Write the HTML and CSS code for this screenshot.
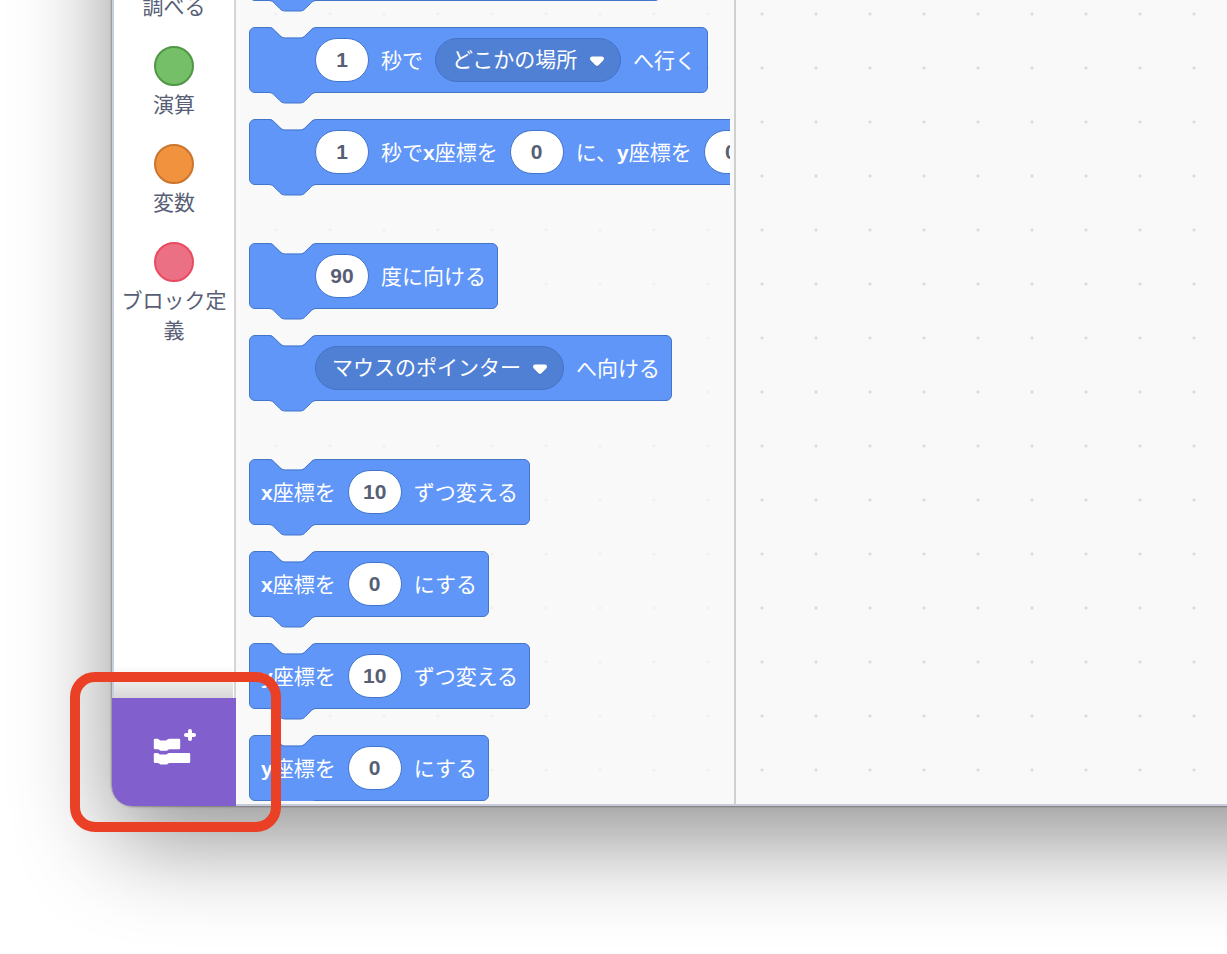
FILE: index.html
```
<!DOCTYPE html>
<html lang="ja">
<head>
<meta charset="utf-8">
<title>ブロックエディター</title>
<link rel="stylesheet" href="styles.css">
</head>
<body>
<svg class="defs" width="0" height="0" aria-hidden="true">
  <symbol id="notch" viewBox="0 0 50 12">
    <path class="notch-fill" d="M0 0H1c2.700 0 4 1.350 5.400 2.700l5.400 5.400c1.350 1.350 2.700 2.700 5.400 2.700h14.800c2.700 0 4-1.350 5.400-2.700l5.400-5.400C44.200 1.350 45.500 .5 48.200 .5H50V0Z"/>
    <path class="edge" d="M0 .5H1c2.700 0 4 1.350 5.400 2.700l5.400 5.400c1.350 1.350 2.700 2.400 5.400 2.400h14.800c2.700 0 4-1.050 5.400-2.400l5.400-5.400C44.200 1.850 45.500 .5 48.200 .5H50"/>
  </symbol>
  <symbol id="bump" viewBox="0 0 50 12">
    <path class="bump-fill" d="M0 0H50V.5H48.200c-2.700 0-4 1.350-5.400 2.700l-5.400 5.400c-1.350 1.350-2.700 2.400-5.400 2.400H17.200c-2.700 0-4-1.050-5.400-2.400L6.400 3.200C5 1.850 3.700 .5 1 .5H0Z"/>
    <path class="edge" d="M50 .5H48.200c-2.700 0-4 1.350-5.400 2.700l-5.400 5.400c-1.350 1.350-2.700 2.400-5.400 2.400H17.200c-2.700 0-4-1.050-5.400-2.400L6.400 3.200C5 1.850 3.700 .5 1 .5H0"/>
  </symbol>
  <symbol id="caret" viewBox="0 0 16 12">
    <path fill="#3f6cb8" d="M3 1h10q3 1 1.500 4L9.500 10.500q-1.500 1.300-3 0L1.500 5Q0 2 3 1Z" opacity=".5"/>
    <path fill="#fff" d="M3 .5h10q2.300.3 2 2.300-.2 1-1 1.900L9.500 9.200q-1.500 1.200-3 0L2 4.700Q1.200 3.800 1 2.800.7.800 3 .5Z"/>
  </symbol>
</svg>
<main class="window">
  <nav class="sidebar" aria-label="カテゴリー">
    <div class="categories">
      <button class="category"><span class="dot sensing"></span><span class="category-name">調べる</span></button>
      <button class="category"><span class="dot operators"></span><span class="category-name">演算</span></button>
      <button class="category"><span class="dot variables"></span><span class="category-name">変数</span></button>
      <button class="category"><span class="dot custom"></span><span class="category-name">ブロック定義</span></button>
    </div>
    <div class="extension">
      <button class="extension-button" aria-label="拡張機能を追加">
        <svg width="44" height="48" viewBox="0 0 44 48" aria-hidden="true">
          <g fill="#fff">
            <path d="M3 10.700h2.200q.9 0 1.500.6l.5.500q.6.600 1.500.600h5q.9 0 1.500-.6l.5-.5q.6-.6 1.500-.6H27q1.200 0 1.200 1.200V20q0 1.200-1.200 1.200h-9.500q-.8 0-1.400.6l-.4.400q-.6.600-1.500.600h-5q-.9 0-1.500-.6l-.4-.4q-.6-.6-1.400-.6H3q-1.200 0-1.200-1.200v-8.100q0-1.200 1.200-1.200Z"/>
            <path d="M3 24.900h2.200q.9 0 1.500.6l.5.500q.6.600 1.500.600h5q.9 0 1.500-.6l.5-.5q.6-.6 1.500-.6H37q1.200 0 1.200 1.200v7.700q0 1.200-1.200 1.200H17.500q-.8 0-1.400.6l-.4.400q-.6.600-1.500.600h-5q-.9 0-1.500-.6l-.4-.4q-.6-.6-1.400-.6H3q-1.200 0-1.200-1.200v-7.700q0-1.200 1.200-1.200Z"/>
          </g>
          <path d="M38 3v8M34 7h8" stroke="#fff" stroke-width="4" stroke-linecap="round"/>
        </svg>
      </button>
      <div class="highlight"></div>
    </div>
  </nav>
  <section class="palette" aria-label="ブロックパレット">
    <div class="blocks">
      <div class="block block-above"><svg class="bump"><use href="#bump"/></svg></div>
      <div class="block with-icon">
        <svg class="notch"><use href="#notch"/></svg><svg class="bump"><use href="#bump"/></svg>
        <input class="value" value="1" aria-label="秒数"><span class="label">秒で</span>
        <span class="menu"><select aria-label="行き先"><option>どこかの場所</option></select><svg class="caret"><use href="#caret"/></svg></span>
        <span class="label">へ行く</span>
      </div>
      <div class="block with-icon">
        <svg class="notch"><use href="#notch"/></svg><svg class="bump"><use href="#bump"/></svg>
        <input class="value" value="1" aria-label="秒数"><span class="label">秒で<b>x</b>座標を</span>
        <input class="value" value="0" aria-label="x座標"><span class="label">に、<b>y</b>座標を</span>
        <input class="value" value="0" aria-label="y座標">
      </div>
      <div class="block with-icon group-start">
        <svg class="notch"><use href="#notch"/></svg><svg class="bump"><use href="#bump"/></svg>
        <input class="value" value="90" aria-label="角度"><span class="label">度に向ける</span>
      </div>
      <div class="block with-icon">
        <svg class="notch"><use href="#notch"/></svg><svg class="bump"><use href="#bump"/></svg>
        <span class="menu"><select aria-label="向き先"><option>マウスのポインター</option></select><svg class="caret"><use href="#caret"/></svg></span>
        <span class="label">へ向ける</span>
      </div>
      <div class="block group-start">
        <svg class="notch"><use href="#notch"/></svg><svg class="bump"><use href="#bump"/></svg>
        <span class="label"><b>x</b>座標を</span><input class="value" value="10" aria-label="x座標の変化"><span class="label">ずつ変える</span>
      </div>
      <div class="block">
        <svg class="notch"><use href="#notch"/></svg><svg class="bump"><use href="#bump"/></svg>
        <span class="label"><b>x</b>座標を</span><input class="value" value="0" aria-label="x座標"><span class="label">にする</span>
      </div>
      <div class="block">
        <svg class="notch"><use href="#notch"/></svg><svg class="bump"><use href="#bump"/></svg>
        <span class="label"><b>y</b>座標を</span><input class="value" value="10" aria-label="y座標の変化"><span class="label">ずつ変える</span>
      </div>
      <div class="block">
        <svg class="notch"><use href="#notch"/></svg><svg class="bump"><use href="#bump"/></svg>
        <span class="label"><b>y</b>座標を</span><input class="value" value="0" aria-label="y座標"><span class="label">にする</span>
      </div>
    </div>
  </section>
  <section class="workspace" aria-label="ワークスペース"></section>
</main>
</body>
</html>
```
FILE: styles.css
```
* {
  box-sizing: border-box;
}

html,
body {
  overflow: hidden;
}

body {
  margin: 0;
  min-height: 100vh;
  background: #fff;
  font-family: "Liberation Sans", "Noto Sans CJK JP", sans-serif;
  font-size: 21px;
}

button,
input,
select {
  margin: 0;
  padding: 0;
  border: 0;
  background: none;
  color: inherit;
  font: inherit;
}

.defs {
  position: absolute;
}

.window {
  position: relative;
  z-index: 0;
  display: flex;
  margin-left: 112px;
}

/* Drop shadow of the window, which runs on past the top and right of the page. */
.window::before {
  content: "";
  position: absolute;
  z-index: -1;
  inset: -300px -300px 0 0;
  border-radius: 0 0 0 22px;
  box-shadow: 0 0 2px 1px rgba(0, 0, 0, 0.3), 0 36px 96px rgba(0, 0, 0, 0.42);
}

.sidebar {
  display: flex;
  flex: none;
  flex-direction: column;
  justify-content: space-between;
  width: 124px;
  border: solid #c8cfdf;
  border-width: 0 2px;
  border-right-color: #d5d5d5;
  border-radius: 0 0 0 22px;
  background: #fff;
}

.categories {
  display: flex;
  flex-direction: column;
  gap: 24px;
  margin-top: -52px;
}

.category {
  display: flex;
  flex-direction: column;
  align-items: center;
  gap: 4px;
  padding: 0 6px;
  color: #575e75;
  line-height: 30px;
}

.dot {
  width: 40px;
  height: 40px;
  border: 2px solid;
  border-radius: 50%;
}

.sensing { border-color: #2e8eb8; background: #5cb1d6; }
.operators { border-color: #4f9745; background: #74bf68; }
.variables { border-color: #cb752d; background: #f0923e; }
.custom { border-color: #ea4a60; background: #ec7084; }

.extension {
  position: relative;
  margin: 0 -2px;
}

.extension::before {
  content: "";
  position: absolute;
  inset: -32px 3px 100% 2px;
  background: linear-gradient(rgba(215, 215, 215, 0), #d8d8d8);
}

.extension-button {
  display: flex;
  align-items: center;
  justify-content: center;
  width: 100%;
  height: 108px;
  border-radius: 0 0 0 20px;
  background: #815fcd;
}

/* Callout frame round the extension button. */
.highlight {
  position: absolute;
  z-index: 2;
  inset: -26px -45px -26px -42px;
  border: 10px solid #ea4025;
  border-radius: 25px;
  pointer-events: none;
}

.palette,
.workspace {
  border-bottom: 2px solid #c8cbdb;
  background-color: #f9f9f9;
  background-size: 54px 54px;
}

.palette {
  flex: none;
  width: 500px;
  padding: 0 4px 3px 0;
  border-right: 2px solid #d0d0d0;
  background-image: radial-gradient(circle at 40px 14px, #f0f0f0 1px, transparent 2px);
}

.workspace {
  flex: 1;
  background-image: radial-gradient(circle at 26px 14px, #dadada 1px, transparent 2px);
}

.blocks {
  display: flex;
  flex-direction: column;
  align-items: flex-start;
  gap: 26px;
  padding-left: 13px;
  overflow: hidden;
}

.block {
  position: relative;
  display: flex;
  align-items: center;
  gap: 12px;
  height: 66px;
  padding: 0 11px;
  border: 1px solid #4376c9;
  border-radius: 6px;
  background: #5f96f8;
  color: #fff;
  white-space: nowrap;
}

.label {
  padding-bottom: 3px;
}

.block-above {
  width: 412px;
  margin-top: -65px;
}

.with-icon {
  padding-left: 65px;
}

.group-start {
  margin-top: 32px;
}

.notch,
.bump {
  position: absolute;
  left: 18px;
  width: 50px;
  height: 12px;
}

.notch { top: -1px; }
.bump { top: 64px; }

.notch-fill { fill: #f9f9f9; }
.bump-fill { fill: #5f96f8; }

.edge {
  fill: none;
  stroke: #4376c9;
}

.value {
  flex: none;
  width: 54px;
  height: 44px;
  border: 1px solid #4376c9;
  border-radius: 22px;
  background: #fff;
  color: #575e75;
  font-weight: 700;
  text-align: center;
}

.menu {
  position: relative;
  display: flex;
}

.menu select {
  height: 44px;
  padding: 0 42px 2px 16px;
  border: 1px solid #4473c6;
  border-radius: 22px;
  background: #5080d3;
  appearance: none;
}

.caret {
  position: absolute;
  top: 18px;
  right: 16px;
  width: 16px;
  height: 12px;
  pointer-events: none;
}
```
